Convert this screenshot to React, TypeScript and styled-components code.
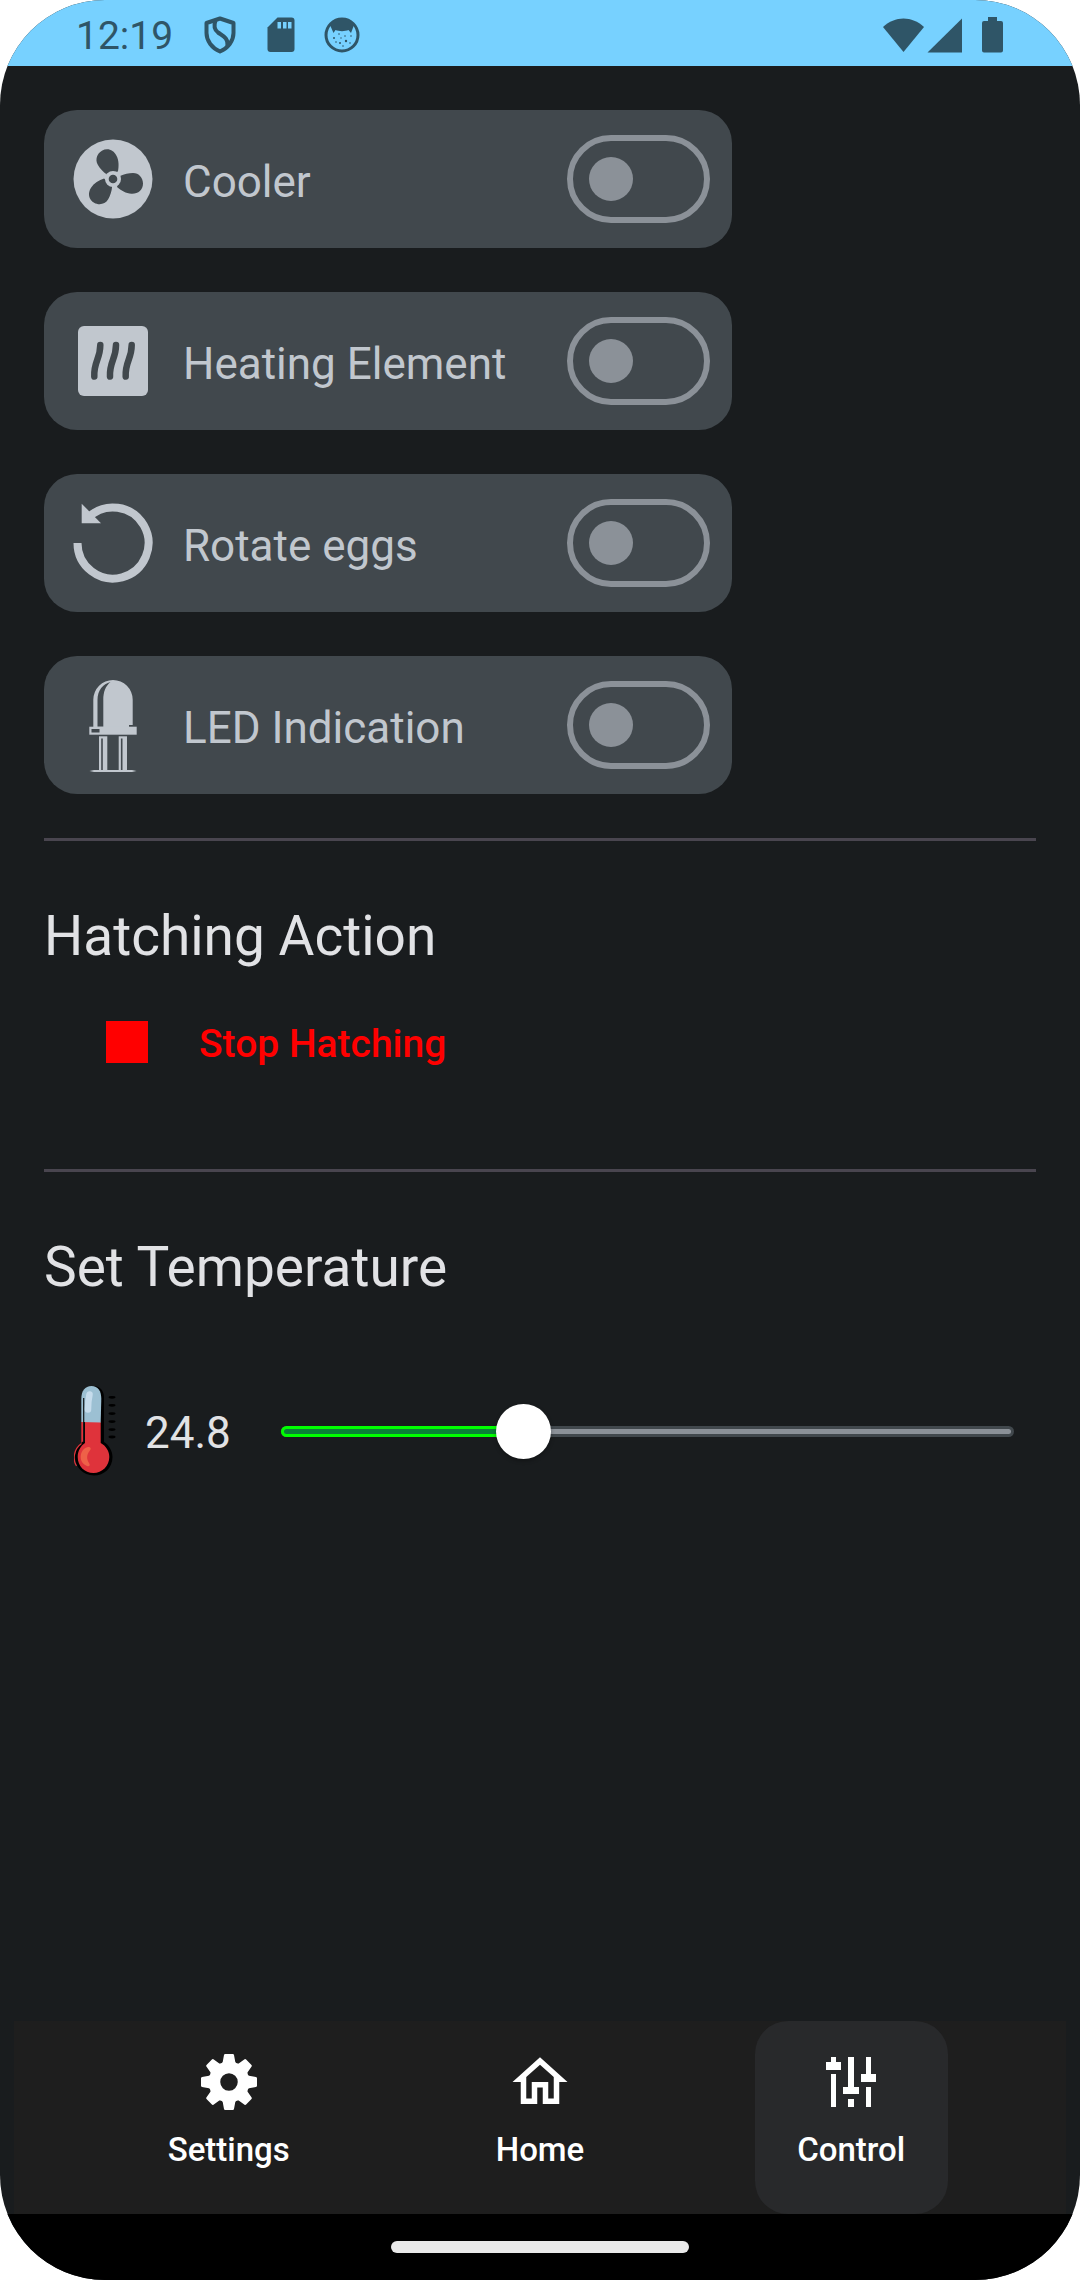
import React, { useState } from "react";
import styled, { createGlobalStyle } from "styled-components";
import { MdOutlineHome } from "react-icons/md";

const color = {
  status: "#77d1ff",
  statusInk: "#2f5567",
  surface: "#191c1e",
  card: "#41484d",
  cardInk: "#c1c7ce",
  outline: "#8b9198",
  ink: "#e1e2e5",
  divider: "#49454f",
  danger: "#ff0000",
  nav: "#1e1e1e",
  navActive: "#28292b",
};

const GlobalStyle = createGlobalStyle`
  *, *::before, *::after { box-sizing: border-box; }
  body {
    margin: 0;
    background: #ffffff;
    font-family: Roboto, "Noto Sans", sans-serif;
  }
`;

const Device = styled.div`
  display: flex;
  flex-direction: column;
  min-height: 100vh;
  border-radius: 105px;
  overflow: hidden;
  background: ${color.surface};
  color: ${color.ink};
`;

const StatusBar = styled.header`
  display: flex;
  align-items: center;
  justify-content: space-between;
  height: 66px;
  padding: 4px 76px 0;
  background: ${color.status};
  color: ${color.statusInk};
`;

const StatusGroup = styled.div`
  display: flex;
  align-items: center;
  gap: 23px;
`;

const Clock = styled.time`
  margin-right: 5px;
  padding-top: 2px;
  font-size: 39px;
  line-height: 48px;
`;

const Glyph = styled.svg`
  display: block;
  flex: none;
`;

const Main = styled.main`
  flex: 1;
  padding: 44px;
`;

const SwitchList = styled.div`
  display: flex;
  flex-direction: column;
  gap: 44px;
  max-width: 688px;
`;

const SwitchCard = styled.div`
  display: flex;
  align-items: center;
  gap: 23px;
  height: 138px;
  padding: 0 22px;
  border-radius: 33px;
  background: ${color.card};
  color: ${color.cardInk};
`;

const SwitchLabel = styled.label`
  flex: 1;
  padding-top: 6px;
  font-size: 44px;
  line-height: 66px;
`;

const Toggle = styled.input`
  appearance: none;
  display: flex;
  align-items: center;
  flex: none;
  width: 143px;
  height: 88px;
  margin: 0;
  padding: 0 16px;
  border: 6px solid ${color.outline};
  border-radius: 44px;
  cursor: pointer;

  &::before {
    content: "";
    width: 44px;
    height: 44px;
    border-radius: 50%;
    background: ${color.outline};
  }

  &:checked {
    justify-content: flex-end;
  }
`;

const Divider = styled.hr`
  height: 3px;
  margin: 44px 0 0;
  border: 0;
  background: ${color.divider};
`;

const Section = styled.section`
  display: flex;
  flex-direction: column;
  align-items: flex-start;
`;

const SectionTitle = styled.h2`
  margin: 62px 0 0;
  font-size: 55px;
  line-height: 66px;
  font-weight: 400;
`;

const StopButton = styled.button`
  display: flex;
  align-items: center;
  gap: 51px;
  height: 110px;
  margin: 18px 0 28px;
  padding: 0 62px;
  border: 0;
  background: none;
  color: ${color.danger};
  font-family: inherit;
  font-size: 39px;
  line-height: 48px;
  font-weight: 500;
  cursor: pointer;
`;

const StopMark = styled.span`
  width: 42px;
  height: 42px;
  background: currentColor;
`;

const StopText = styled.span`
  padding-top: 4px;
`;

const TemperatureRow = styled.div`
  display: flex;
  align-items: center;
  align-self: stretch;
  height: 110px;
  margin-top: 76px;
  padding: 0 22px 0 30px;
`;

const Reading = styled.output`
  flex: none;
  width: 136px;
  margin-left: 29px;
  padding-top: 4px;
  font-size: 44px;
  line-height: 66px;
`;

const Slider = styled.div`
  flex: 1;
  display: grid;
  align-items: center;
`;

const Track = styled.div`
  grid-area: 1 / 1;
  height: 11px;
  padding: 3px;
  border-radius: 6px;
  background: ${color.card};

  &::before {
    content: "";
    display: block;
    height: 5px;
    border-radius: 3px;
    background: ${color.outline};
  }
`;

const Filled = styled(Track)`
  background: #00ff00;

  &::before {
    background: #0a8038;
  }
`;

const Range = styled.input`
  grid-area: 1 / 1;
  appearance: none;
  width: calc(100% + 55px);
  height: 55px;
  margin: 0 -27px;
  background: none;
  cursor: pointer;

  &::-webkit-slider-thumb {
    appearance: none;
    width: 55px;
    height: 55px;
    border-radius: 50%;
    background: #ffffff;
    box-shadow: 0 2px 4px rgba(0, 0, 0, 0.3);
  }
`;

const NavBar = styled.nav`
  display: flex;
  justify-content: space-evenly;
  margin: 0 14px;
  background: ${color.nav};
`;

const NavItem = styled.a<{ $active?: boolean }>`
  display: flex;
  flex-direction: column;
  align-items: center;
  gap: 13px;
  width: 193px;
  height: 193px;
  padding-top: 28px;
  border-radius: 33px;
  background: ${(p) => (p.$active ? color.navActive : "transparent")};
  color: #ffffff;
  font-size: 33px;
  line-height: 44px;
  font-weight: 500;
  text-decoration: none;
`;

const GestureArea = styled.footer`
  display: flex;
  justify-content: center;
  align-items: center;
  height: 66px;
  background: #000000;
`;

const GestureHandle = styled.div`
  width: 298px;
  height: 12px;
  border-radius: 6px;
  background: #e9e9e9;
`;

const ShieldIcon = () => (
  <Glyph width="38" height="38" viewBox="0 0 38 38" fill="none" stroke="currentColor" strokeWidth="4" strokeLinejoin="round" aria-hidden>
    <path d="M19 2.500 L32.500 7 V17 C32.500 25 27 32 19 35.500 C11 32 5.500 25 5.500 17 V7 Z" />
    <path d="M14.500 4.500 C12.500 10 13 13.500 17 16.500 C22 20 27.500 22 26.500 30" />
  </Glyph>
);

const SdCardIcon = () => (
  <Glyph width="38" height="38" viewBox="0 0 38 38" fill="currentColor" aria-hidden>
    <path d="M15.500 1.500 H29.500 Q32.500 1.500 32.500 4.500 V33 Q32.500 36 29.500 36 H8.500 Q5.500 36 5.500 33 V11.500 Z" />
    <path fill={color.status} d="M15.500 6 H19 V12.500 H15.500 Z M21 6 H24.500 V12.500 H21 Z M26 6 H29.500 V12.500 H26 Z" />
  </Glyph>
);

const FaceIcon = () => (
  <Glyph width="38" height="38" viewBox="0 0 38 38" fill="currentColor" aria-hidden>
    <circle cx="19" cy="19" r="16" fill="none" stroke="currentColor" strokeWidth="3" />
    <path d="M7 9 L12 4 H26 L31 9 L28 17 L25.500 14 C22 15.500 16 15.500 12.500 14 L10.500 17 Z" />
    <circle cx="11" cy="22" r="1" />
    <circle cx="16" cy="18" r="0.800" />
    <circle cx="17" cy="27" r="1" />
    <circle cx="22" cy="20" r="0.800" />
    <circle cx="23" cy="25" r="1.200" />
    <circle cx="28" cy="20" r="0.800" />
    <circle cx="13" cy="26" r="0.800" />
    <circle cx="20" cy="30" r="0.800" />
    <circle cx="27" cy="27" r="0.800" />
    <circle cx="18" cy="22" r="0.700" />
  </Glyph>
);

const SystemIcons = () => (
  <Glyph width="121" height="36" viewBox="0 0 121 36" fill="currentColor" aria-hidden>
    <path d="M20.500 35 L0 10 C12 -1.500 29 -1.500 41 10 Z" />
    <path d="M79 1.500 V35.500 H44.500 Z" />
    <path d="M105 0 H114 V4 H118 Q120 4 120 6 V33.500 Q120 35.500 118 35.500 H101 Q99 35.500 99 33.500 V6 Q99 4 101 4 H105 Z" />
  </Glyph>
);

const FanIcon = () => {
  const blade =
    "M7 -3 C11 -5 16 -6 20 -6 C26 -6 30 -1 30 4.500 C30 11 25 15 18.500 14.700 C13 14.500 8 11.500 4 8 Z";
  return (
    <Glyph width="94" height="94" viewBox="-47 -47 94 94" fill={color.card} aria-hidden>
      <circle r="39.500" fill={color.cardInk} />
      <path d={blade} />
      <path d={blade} transform="rotate(120)" />
      <path d={blade} transform="rotate(240)" />
      <circle r="8" fill={color.cardInk} />
      <circle r="4.300" />
    </Glyph>
  );
};

const HeaterIcon = () => (
  <Glyph width="94" height="94" viewBox="0 0 94 94" aria-hidden>
    <rect x="12" y="12" width="70" height="70" rx="6" fill={color.cardInk} />
    <g fill="none" stroke={color.card} strokeWidth="6.500" strokeLinecap="round">
      <path d="M34.300 31 C34.300 45 27.500 48 28.300 62.500" />
      <path d="M50 31 C50 45 43.200 48 44 62.500" />
      <path d="M65.700 31 C65.700 45 58.900 48 59.700 62.500" />
    </g>
  </Glyph>
);

const RotateIcon = () => (
  <Glyph width="94" height="94" viewBox="0 0 94 94" aria-hidden>
    <path d="M11.500 47 A35.500 35.500 0 1 0 22 21.800" fill="none" stroke={color.cardInk} strokeWidth="8" />
    <path d="M15.700 7.700 V27.300 H35 Z" fill={color.cardInk} />
  </Glyph>
);

const LedIcon = () => (
  <Glyph width="94" height="94" viewBox="0 0 94 94" fill={color.cardInk} aria-hidden>
    <path d="M27.300 49 V21.700 A19.700 19.700 0 0 1 66.700 21.700 V47 H63 V49 Z" />
    <path fill={color.card} d="M31.500 48.700 V22 C31.500 12 37 6 44.500 4 C39.500 8 37.300 14 37.300 22 V48.700 Z" />
    <rect x="23.300" y="48.700" width="47.400" height="8" />
    <rect x="25.500" y="51" width="8" height="3.500" fill={color.card} />
    <rect x="33" y="58.300" width="8.300" height="34.500" />
    <rect x="52.700" y="58.300" width="8.300" height="34.500" />
    <rect x="35.200" y="60.500" width="1.600" height="31.500" fill={color.card} />
    <rect x="54.900" y="60.500" width="1.600" height="31.500" fill={color.card} />
    <path d="M23.500 93 L28 92 H66 L70.500 93 L66 94 H28 Z" />
  </Glyph>
);

const ThermometerIcon = () => (
  <Glyph width="42" height="90" viewBox="0 0 42 90" aria-hidden>
    <path
      fill="#000000"
      d="M20 0 C26 0 30 5 30 11 V56 C35 59 38.500 65 38.500 71 C38.500 82 30 89.500 20 89.500 C9 89.500 1 81 1 71 C1 65 4 60 8 56 V11 C8 5 13 0 20 0 Z"
    />
    <path fill="#df333b" d="M7.300 36 H9.500 V55 L7.300 57 Z" />
    <path d="M7.500 57.500 C-0.500 63 -1.500 74 2.500 80" fill="none" stroke="#df333b" strokeWidth="1.200" />
    <path fill="#df333b" d="M11 36 H26.700 V57 C32 60 35.300 65 35.300 71 C35.300 80 28 87 19.500 87 C10.500 87 3.700 80 3.700 71 C3.700 65 6.500 60 11 57 Z" />
    <path fill="#9cc0d3" d="M7.300 36 V13 C7.300 5 11 0 17.500 0 C24 0 27.300 5 27.300 13 L26.700 36.500 Z" />
    <path d="M9.700 12 V56" stroke="#101214" strokeWidth="1.200" />
    <path d="M15.500 8.500 C14.500 13 14 18 14 23.500" fill="none" stroke="#c6dcec" strokeWidth="6.500" strokeLinecap="round" />
    <path fill="#ee6148" d="M14 61 C17 61 17.500 63 15.500 65 C12.500 69 12.500 73 15 77 C16.500 79 15.500 81 13 80 C9 78.500 6.700 75 6.700 71 C6.700 66 9.500 62 14 61 Z" />
    {[11.3, 19.3, 27.6, 35.6, 43.6, 51].map((y) => (
      <ellipse key={y} cx="38" cy={y} rx="3.500" ry="1.400" fill="#000000" />
    ))}
  </Glyph>
);

const GearIcon = () => (
  <Glyph width="66" height="66" viewBox="-33 -33 66 66" fill="currentColor" aria-hidden>
    {[0, 45, 90, 135, 180, 225, 270, 315].map((angle) => (
      <path
        key={angle}
        transform={`rotate(${angle})`}
        d="M-3.800 -28 H3.800 Q4.800 -28 5 -27 L6.300 -20 L8.500 -17 H-8.500 L-6.300 -20 L-5 -27 Q-4.800 -28 -3.800 -28 Z"
      />
    ))}
    <circle r="14.500" fill="none" stroke="currentColor" strokeWidth="11.500" />
  </Glyph>
);

const SlidersIcon = () => (
  <Glyph width="66" height="66" viewBox="0 0 66 66" fill="currentColor" aria-hidden>
    <path d="M13 8 H18 V13 H23 V21 H8 V13 H13 Z M13 25 H18 V58 H13 Z" />
    <path d="M30 8 H36 V38 H41 V45 H25 V38 H30 Z M30 50 H36 V58 H30 Z" />
    <path d="M48 8 H53 V25 H58 V33 H43 V25 H48 Z M48 38 H53 V58 H48 Z" />
  </Glyph>
);

const devices = [
  { id: "cooler", label: "Cooler", Icon: FanIcon },
  { id: "heater", label: "Heating Element", Icon: HeaterIcon },
  { id: "rotate", label: "Rotate eggs", Icon: RotateIcon },
  { id: "led", label: "LED Indication", Icon: LedIcon },
];

const MAX_TEMPERATURE = 75;

export default function App() {
  const [temperature, setTemperature] = useState(24.8);

  return (
    <>
      <GlobalStyle />
      <Device>
        <StatusBar>
          <StatusGroup>
            <Clock>12:19</Clock>
            <ShieldIcon />
            <SdCardIcon />
            <FaceIcon />
          </StatusGroup>
          <SystemIcons />
        </StatusBar>

        <Main>
          <SwitchList>
            {devices.map(({ id, label, Icon }) => (
              <SwitchCard key={id}>
                <Icon />
                <SwitchLabel htmlFor={id}>{label}</SwitchLabel>
                <Toggle id={id} type="checkbox" role="switch" />
              </SwitchCard>
            ))}
          </SwitchList>

          <Divider />
          <Section>
            <SectionTitle>Hatching Action</SectionTitle>
            <StopButton type="button">
              <StopMark />
              <StopText>Stop Hatching</StopText>
            </StopButton>
          </Section>

          <Divider />
          <Section>
            <SectionTitle id="temperature-title">Set Temperature</SectionTitle>
            <TemperatureRow>
              <ThermometerIcon />
              <Reading htmlFor="temperature">{temperature.toFixed(1)}</Reading>
              <Slider>
                <Track />
                <Filled style={{ width: `${(temperature / MAX_TEMPERATURE) * 100}%` }} />
                <Range
                  id="temperature"
                  type="range"
                  aria-labelledby="temperature-title"
                  min={0}
                  max={MAX_TEMPERATURE}
                  step={0.1}
                  value={temperature}
                  onChange={(e) => setTemperature(Number(e.target.value))}
                />
              </Slider>
            </TemperatureRow>
          </Section>
        </Main>

        <NavBar>
          <NavItem href="#settings">
            <GearIcon />
            Settings
          </NavItem>
          <NavItem href="#home">
            <MdOutlineHome size={66} aria-hidden />
            Home
          </NavItem>
          <NavItem href="#control" $active aria-current="page">
            <SlidersIcon />
            Control
          </NavItem>
        </NavBar>
        <GestureArea>
          <GestureHandle />
        </GestureArea>
      </Device>
    </>
  );
}
